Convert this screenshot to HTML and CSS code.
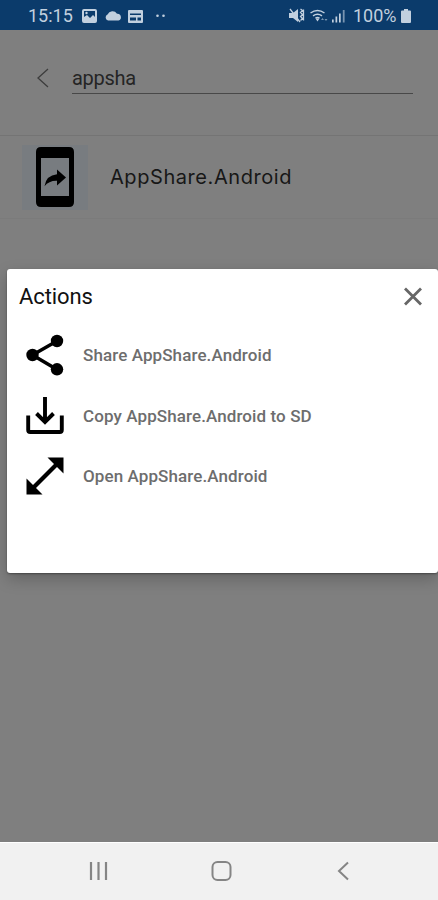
FILE: index.html
```html
<!DOCTYPE html>
<html lang="en">
<head>
<meta charset="utf-8">
<meta name="viewport" content="width=device-width">
<title>AppShare</title>
<link rel="stylesheet" href="styles.css">
</head>
<body>
<div class="phone">
  <header class="status">
    <span class="clock">15:15</span>
    <svg class="status-left" width="90" height="16" viewBox="0 0 90 16" fill="#c2d0df">
      <path fill-rule="evenodd" d="M3 1h11q2 0 2 2v10q0 2-2 2H3q-2 0-2-2V3q0-2 2-2zm0 2v6l3-2 3 3 3-3 2 2V3z"/><circle cx="5.5" cy="5" r="1.2"/>
      <path d="M27 12.500a3.200 3.200 0 0 1-.5-6 5.500 5.500 0 0 1 9.500-.8 3.500 3.500 0 0 1 1.500 6.800z"/>
      <path fill-rule="evenodd" d="M48 2h13q1 0 1 1v11q0 1-1 1H48q-1 0-1-1V3q0-1 1-1zm1 3.500V7h11V5.500zm0 4v3h6v-3zm7.500 0v3h3.500v-3z"/>
      <circle cx="76.500" cy="7.800" r="1.300"/><circle cx="82.500" cy="7.800" r="1.300"/>
    </svg>
    <svg class="status-right" width="60" height="18" viewBox="0 0 60 18" fill="#c2d0df">
      <path d="M1 6h4l5-4v13l-5-4H1z"/><path d="M2 2l10 13M12.500 2l2 1.500-2 2 2 2-2 2 2 2-2 2M15.500 2.500v11" fill="none" stroke="#c2d0df" stroke-width="1.300"/>
      <g fill="none" stroke="#c2d0df" stroke-width="1.500"><path d="M22.500 6q7-5 14 0M25 8.800q4.500-3 9 0"/><path d="M27.500 11.200q2-1.400 4 0"/></g><path d="M27.500 11.500h4l-2 3z"/><path d="M33 13l1.500-2 1.500 2zM36.500 12h3L38 14z" opacity=".6"/>
      <path d="M44 12.500h1.700v3H44zM47.500 9.500h1.700v6h-1.700zM51 6.500h1.700v9H51z"/><path d="M54.800 3h1.800v12.500h-1.800z" opacity=".6"/>
    </svg>
    <span class="percent">100%</span>
    <svg class="battery" width="12" height="16" viewBox="0 0 12 16"><path d="M4 1h4v1.500h2q1 0 1 1V14q0 1-1 1H2q-1 0-1-1V3.500q0-1 1-1h2z" fill="#c2d0df"/></svg>
  </header>
  <main class="screen">
    <div class="search">
      <svg class="back" width="14" height="20" viewBox="0 0 14 20"><path d="M12 1L2 10l10 9" fill="none" stroke="#3d3d3d" stroke-width="1.300"/></svg>
      <div class="query"><span>appsha</span></div>
    </div>
    <div class="app">
      <div class="app-icon">
        <svg width="40" height="62" viewBox="0 0 40 62"><path fill-rule="evenodd" d="M6 1h28q5 0 5 5v50q0 5-5 5H6q-5 0-5-5V6q0-5 5-5zm0 11v38h28V12z" fill="#000"/><path d="M22 23.500l9 8-9 8v-4.800q-8-.3-12.500 5.500 1.500-11 12.500-12z" fill="#000"/></svg>
      </div>
      <span class="app-name">AppShare.Android</span>
    </div>
  </main>
  <section class="dialog">
    <div class="dialog-head">
      <h1>Actions</h1>
      <svg width="20" height="20" viewBox="0 0 20 20"><path d="M2 1.500l16 16M18 1.500L2 17.500" stroke="#666" stroke-width="2.800"/></svg>
    </div>
    <div class="action">
      <svg width="38" height="42" viewBox="0 0 38 42"><path d="M31 7L6.500 21 31 35.500" fill="none" stroke="#000" stroke-width="3.500"/><circle cx="31" cy="7" r="6.200"/><circle cx="6.500" cy="21" r="6.200"/><circle cx="31" cy="35.300" r="6.200"/></svg>
      <span>Share AppShare.Android</span>
    </div>
    <div class="action">
      <svg width="38" height="42" viewBox="0 0 38 42"><path d="M2.200 20.500V35q0 2 2 2h29.600q2 0 2-2V20.500M19 2v24M10.500 18.500l8.500 8.500 8.500-8.500" fill="none" stroke="#000" stroke-width="3.900"/></svg>
      <span>Copy AppShare.Android to SD</span>
    </div>
    <div class="action">
      <svg width="38" height="42" viewBox="0 0 38 42"><path d="M6 34L32 8" stroke="#000" stroke-width="4.200"/><path d="M21.500 2.500H37.500v16zM.5 23.500v16h16z"/></svg>
      <span>Open AppShare.Android</span>
    </div>
  </section>
  <nav class="nav">
    <svg width="20" height="20" viewBox="0 0 20 20"><path d="M3 1v18M10.500 1v18M18 1v18" stroke="#858585" stroke-width="2.200"/></svg>
    <svg width="22" height="22" viewBox="0 0 22 22"><rect x="1.500" y="2" width="18" height="18" rx="5" fill="none" stroke="#858585" stroke-width="2"/></svg>
    <svg width="14" height="20" viewBox="0 0 14 20"><path d="M12 1.500L3 10l9 8.500" fill="none" stroke="#858585" stroke-width="2"/></svg>
  </nav>
</div>
</body>
</html>
```
FILE: styles.css
```css
* { box-sizing: border-box; }
body { margin: 0; font-family: Roboto, sans-serif; }
svg { display: block; flex: none; }
.phone { position: relative; width: 438px; height: 900px; display: flex; flex-direction: column; background: #7f7f7f; overflow: hidden; }
.status { height: 30px; padding: 1px 26px 0 28px; display: flex; align-items: center; background: #0b3b6b; color: #c2d0df; font-size: 18px; }
.clock { width: 45px; }
.status-left { margin-left: 8px; }
.status-right { margin-left: auto; }
.percent { margin-left: 5px; width: 44px; white-space: nowrap; }
.battery { margin-left: 3px; }
.screen { flex: 1; }
.search { height: 106px; padding: 34px 25px 0 36px; display: flex; border-bottom: 1px solid #747474; }
.back { margin-top: 4px; }
.query { flex: 1; height: 30px; margin-left: 22px; border-bottom: 1px solid #484848; font-size: 20px; line-height: 28px; letter-spacing: -0.3px; color: #252525; }
.app { height: 83px; padding-left: 22px; display: flex; align-items: center; border-bottom: 1px solid #7b7b7b; }
.app-icon { width: 66px; height: 65px; display: flex; align-items: center; justify-content: center; background: #787c80; }
.app-name { margin-left: 22px; font: 400 20px/26px Inter, sans-serif; letter-spacing: 0.57px; color: #171717; }
.dialog { position: absolute; left: 7px; top: 269px; width: 431px; height: 304px; background: #fff; border-radius: 3px; box-shadow: 0 6px 16px rgba(0,0,0,.22), 0 1px 2px rgba(0,0,0,.35); }
.dialog-head { height: 55px; padding: 0 15px 0 12px; display: flex; align-items: center; justify-content: space-between; }
.dialog-head h1 { margin: 0; font-size: 22px; font-weight: 400; letter-spacing: -0.1px; color: #111; }
.action { height: 61px; padding-left: 19px; display: flex; align-items: center; gap: 19px; color: #6d6d6d; font-size: 17px; font-weight: 500; letter-spacing: 0.1px; }
.action:last-child { height: 60px; }
.nav { height: 58px; padding: 0 88px 2px; display: flex; align-items: center; justify-content: space-between; background: #f1f1f1; border-top: 1px solid #fff; }
```
